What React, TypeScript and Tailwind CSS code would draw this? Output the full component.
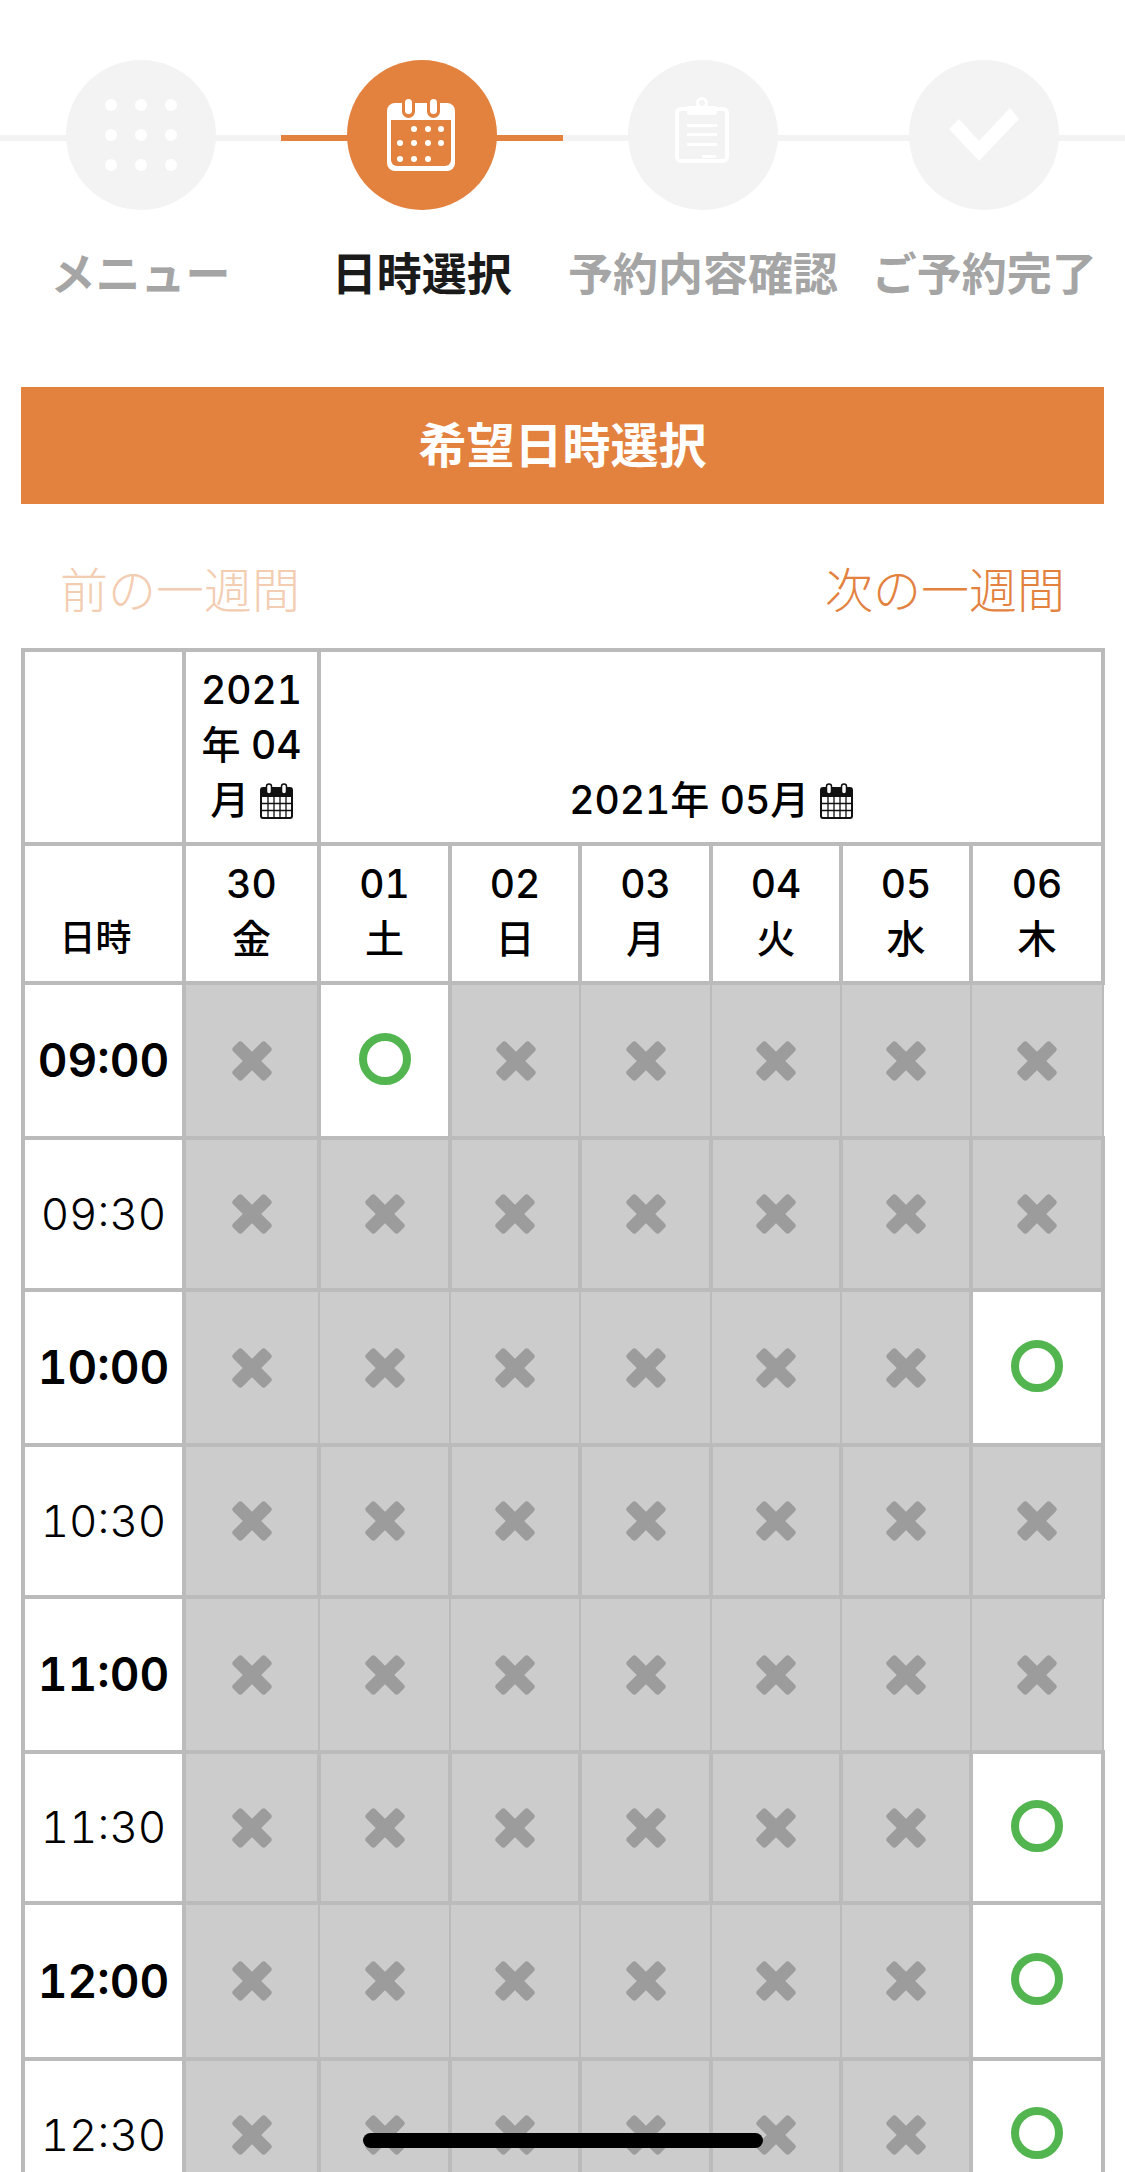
// @ts-nocheck
import React from 'react';

const ORANGE = '#e3823f';

const DAYS = [
  ['30', '金'],
  ['01', '土'],
  ['02', '日'],
  ['03', '月'],
  ['04', '火'],
  ['05', '水'],
  ['06', '木'],
];

// open = column indexes which can be booked
const ROWS = [
  { time: '09:00', bold: true, h: 'h-[155px]', open: [1] },
  { time: '09:30', bold: false, h: 'h-[152px]', open: [] },
  { time: '10:00', bold: true, h: 'h-[155px]', open: [6] },
  { time: '10:30', bold: false, h: 'h-[152px]', open: [] },
  { time: '11:00', bold: true, h: 'h-[155px]', open: [] },
  { time: '11:30', bold: false, h: 'h-[151px]', open: [6] },
  { time: '12:00', bold: true, h: 'h-[156px]', open: [6] },
  { time: '12:30', bold: false, h: 'h-[152px]', open: [6] },
];

function MenuIcon() {
  const pos = [45, 75, 105];
  return (
    <svg viewBox="0 0 150 150" className="w-full h-full">
      {pos.map((y) => pos.map((x) => <circle key={x + '-' + y} cx={x} cy={y} r="6" fill="#fff" />))}
    </svg>
  );
}

function CalendarIcon() {
  const dots = [
    [67, 69], [81, 69], [94, 69],
    [53, 83], [67, 83], [81, 83], [94, 83],
    [53, 99], [67, 99], [81, 99],
  ];
  return (
    <svg viewBox="0 0 150 150" className="w-full h-full">
      <rect x="40" y="43" width="68" height="68" rx="8" fill="#fff" />
      <path d="M44 60h60v40a6 6 0 0 1-6 6H50a6 6 0 0 1-6-6z" fill={ORANGE} />
      <rect x="55" y="36" width="13" height="22" rx="6.5" fill={ORANGE} />
      <rect x="80" y="36" width="13" height="22" rx="6.5" fill={ORANGE} />
      <rect x="58" y="39" width="7" height="15" rx="3.5" fill="#fff" />
      <rect x="83" y="39" width="7" height="15" rx="3.5" fill="#fff" />
      {dots.map(([x, y]) => <circle key={x + '-' + y} cx={x} cy={y} r="3" fill="#fff" />)}
    </svg>
  );
}

function ClipboardIcon() {
  return (
    <svg viewBox="0 0 150 150" className="w-full h-full">
      <rect x="49" y="49" width="50" height="52" rx="4" fill="none" stroke="#fff" strokeWidth="4" />
      <circle cx="74" cy="43" r="4.5" fill="none" stroke="#fff" strokeWidth="3" />
      <rect x="59" y="46" width="30" height="9" rx="2" fill="#fff" />
      <rect x="59" y="64" width="30" height="3" fill="#fff" />
      <rect x="59" y="73" width="30" height="3" fill="#fff" />
      <rect x="59" y="83" width="30" height="3" fill="#fff" />
      <rect x="74" y="95" width="14" height="3" fill="#fff" />
    </svg>
  );
}

function CheckIcon() {
  return (
    <svg viewBox="0 0 150 150" className="w-full h-full">
      <path d="M40 69L50 59L70 81L101 48L110 59L70 101Z" fill="#fff" />
    </svg>
  );
}

function SmallCalendar() {
  return (
    <svg viewBox="0 0 33 36" className="inline-block w-[33px] h-[36px] align-[-5px]">
      <rect x="1" y="5" width="31" height="30" rx="2" fill="none" stroke="#111" strokeWidth="2" />
      <rect x="1" y="5" width="31" height="9" fill="#111" />
      <rect x="6.5" y="1" width="5" height="10" rx="2.5" fill="#fff" stroke="#111" strokeWidth="1.5" />
      <rect x="21.5" y="1" width="5" height="10" rx="2.5" fill="#fff" stroke="#111" strokeWidth="1.5" />
      <path d="M1 20.5h31M1 27.5h31M8 14v21M14 14v21M20 14v21M26 14v21" stroke="#111" strokeWidth="1.3" fill="none" />
    </svg>
  );
}

function Cross() {
  return (
    <svg viewBox="0 0 40 40" className="block mx-auto w-[40px] h-[40px]">
      <rect x="-3" y="13.5" width="46" height="13" rx="3" fill="#9c9c9c" transform="rotate(45 20 20)" />
      <rect x="-3" y="13.5" width="46" height="13" rx="3" fill="#9c9c9c" transform="rotate(-45 20 20)" />
    </svg>
  );
}

function Step({ label, state, children }: any) {
  const active = state === 'active';
  return (
    <div className="relative w-1/4 flex flex-col items-center">
      <div className={`absolute left-0 right-0 top-[75px] h-[6px] ${active ? 'bg-[#e3823f]' : 'bg-[#f3f3f3]'}`}></div>
      <div className={`relative w-[150px] h-[150px] rounded-full ${active ? 'bg-[#e3823f]' : 'bg-[#f3f3f3]'}`}>
        {children}
      </div>
      <div className={`mt-[40px] text-[45px] leading-[50px] font-bold whitespace-nowrap ${active ? 'text-[#1a1a1a]' : 'text-[#a5a5a5]'}`}>
        {label}
      </div>
    </div>
  );
}

export default function App() {
  return (
    <div lang="ja" className="relative h-[2172px] overflow-hidden bg-white font-['Inter','Noto_Sans_CJK_JP',sans-serif]">
      {/* STEPS */}
      <div className="flex pt-[60px]">
        <Step label="メニュー"><MenuIcon /></Step>
        <Step label="日時選択" state="active"><CalendarIcon /></Step>
        <Step label="予約内容確認"><ClipboardIcon /></Step>
        <Step label="ご予約完了"><CheckIcon /></Step>
      </div>

      <div className="mx-[21px] mt-[87px]">
        <div className="h-[117px] bg-[#e3823f] flex items-center justify-center text-white text-[48px] font-bold">
          希望日時選択
        </div>

        <div className="flex justify-between px-[39px] pt-[58px] pb-[28px] text-[48px] leading-[58px] font-light">
          <span className="text-[#f3cdb2]">前の一週間</span>
          <span className="text-[#e3823f]">次の一週間</span>
        </div>

        <table className="table-fixed w-[1083px] border-collapse text-black text-[39px] leading-[55px] font-medium text-center tabular-nums">
          <colgroup>
            <col className="w-[161px]" />
            <col className="w-[135px]" />
            <col className="w-[131px]" />
            <col className="w-[130px]" />
            <col className="w-[131px]" />
            <col className="w-[130px]" />
            <col className="w-[130px]" />
            <col className="w-[132px]" />
          </colgroup>
          <thead>
            <tr className="h-[194px]">
              <th className="border-[4px] border-[#bbbbbb] align-bottom font-medium"></th>
              <th className="border-[4px] border-[#bbbbbb] align-bottom font-medium pb-[15px]">
                2021年 04月 <SmallCalendar />
              </th>
              <th colSpan={7} className="border-[4px] border-[#bbbbbb] align-bottom font-medium pb-[15px]">
                2021年 05月 <SmallCalendar />
              </th>
            </tr>
            <tr className="h-[139px]">
              <th className="border-[4px] border-[#bbbbbb] align-bottom font-medium pb-[15px] pr-[16px] text-[36px]">日時</th>
              {DAYS.map(([d, w]) => (
                <th key={d} className="border-[4px] border-[#bbbbbb] align-bottom font-medium pb-[15px]">
                  {d}
                  <br />
                  {w}
                </th>
              ))}
            </tr>
          </thead>
          <tbody>
            {ROWS.map((row) => (
              <tr key={row.time} className={row.h}>
                <td className={`border-[4px] border-[#bbbbbb] ${row.bold ? 'text-[46px] font-semibold' : 'text-[44px] font-light'}`}>
                  {row.time}
                </td>
                {DAYS.map(([d], i) =>
                  row.open.includes(i) ? (
                    <td key={d} className="border-[4px] border-[#bbbbbb] bg-white">
                      <div className="mx-auto w-[52px] h-[52px] rounded-full border-[8px] border-[#52b54f] -translate-y-[2px]"></div>
                    </td>
                  ) : (
                    <td
                      key={d}
                      className={`border-y-[4px] border-[#bbbbbb] bg-[#cccccc] ${row.bold ? 'border-x-[2px]' : 'border-x-[4px]'}`}
                    >
                      <Cross />
                    </td>
                  )
                )}
              </tr>
            ))}
          </tbody>
        </table>
      </div>

      {/* HOME INDICATOR */}
      <div className="absolute left-[363px] top-[2133px] w-[400px] h-[15px] rounded-full bg-black"></div>
    </div>
  );
}
